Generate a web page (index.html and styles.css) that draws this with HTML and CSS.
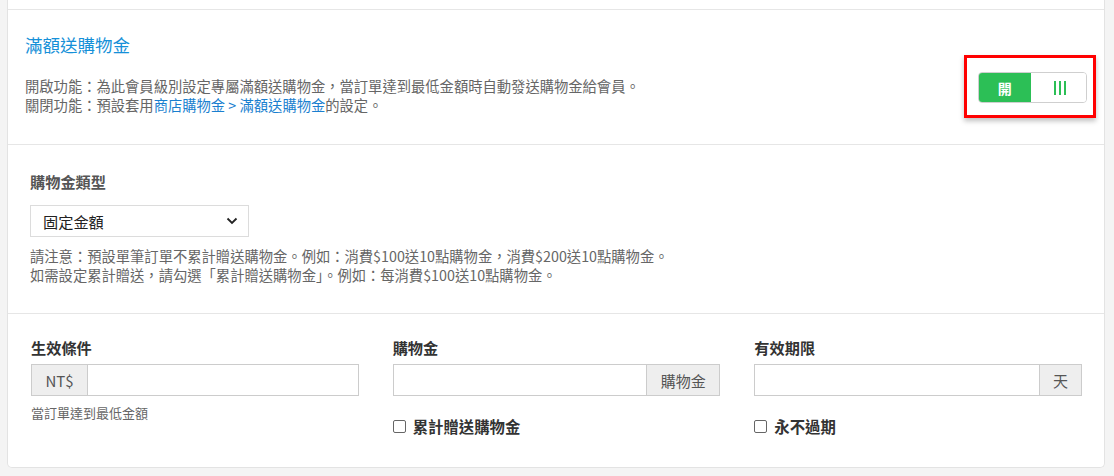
FILE: index.html
```html
<!DOCTYPE html>
<html lang="zh-Hant">
<head>
  <meta charset="UTF-8" />
  <title>滿額送購物金</title>
  <link rel="stylesheet" href="styles.css">
</head>
<body>
  <div class="card">
    <div class="card-top"></div>

    <!-- 開關 -->
    <div class="section intro">
      <div class="intro-text">
        <h3 class="title">滿額送購物金</h3>
        <p class="desc">開啟功能：為此會員級別設定專屬滿額送購物金，當訂單達到最低金額時自動發送購物金給會員。</p>
        <p class="desc">關閉功能：預設套用<a href="#">商店購物金 &gt; 滿額送購物金</a>的設定。</p>
      </div>
      <div class="highlight">
        <div class="toggle">
          <span class="toggle-on">開</span>
          <span class="toggle-off">
            <svg width="12" height="14" viewBox="0 0 12 14"><rect x="0" y="0" width="2" height="14" fill="#2cbf56"/><rect x="5" y="0" width="2" height="14" fill="#2cbf56"/><rect x="10" y="0" width="2" height="14" fill="#2cbf56"/></svg>
          </span>
        </div>
      </div>
    </div>

    <!-- 類型 -->
    <div class="section type">
      <label class="label muted">購物金類型</label>
      <div class="select">
        <span>固定金額</span>
        <svg width="12" height="8" viewBox="0 0 12 8"><path d="M1.5 1.5 L6 6 L10.5 1.5" fill="none" stroke="#222" stroke-width="1.8"/></svg>
      </div>
      <p class="help big">請注意：預設單筆訂單不累計贈送購物金。例如：消費$100送10點購物金，消費$200送10點購物金。</p>
      <p class="help big">如需設定累計贈送，請勾選「累計贈送購物金」。例如：每消費$100送10點購物金。</p>
    </div>

    <!-- 條件 -->
    <div class="section fields">
      <div class="field">
        <label class="label">生效條件</label>
        <div class="input-group">
          <span class="addon addon-left">NT$</span>
          <input type="text" />
        </div>
        <p class="help">當訂單達到最低金額</p>
      </div>
      <div class="field">
        <label class="label">購物金</label>
        <div class="input-group">
          <input type="text" />
          <span class="addon addon-right">購物金</span>
        </div>
        <label class="check"><span class="box"></span>累計贈送購物金</label>
      </div>
      <div class="field">
        <label class="label">有效期限</label>
        <div class="input-group">
          <input type="text" />
          <span class="addon addon-right addon-day">天</span>
        </div>
        <label class="check"><span class="box"></span>永不過期</label>
      </div>
    </div>
  </div>
</body>
</html>
```

FILE: styles.css
```css
body {
  margin: 0;
  background: #f4f4f4;
  font-family: "Noto Sans CJK TC", "Noto Sans", sans-serif;
  color: #333;
  padding: 0 9px 8px 7px;
}
.card {
  background: #fff;
  border: 1px solid #e3e3e3;
  border-top: none;
  border-radius: 0 0 5px 5px;
}
.card-top {
  height: 9px;
  border-bottom: 1px solid #e6e6e6;
}
.section {
  border-bottom: 1px solid #e6e6e6;
}
.section:last-child {
  border-bottom: none;
}
.intro {
  display: flex;
  justify-content: space-between;
  align-items: flex-start;
  height: 135px;
  box-sizing: border-box;
  padding: 24px 8px 0 17px;
}
.title {
  margin: 0 0 20px;
  font-size: 17.5px;
  font-weight: normal;
  line-height: 22px;
  color: #1590d8;
}
.desc {
  margin: 0;
  font-size: 14.3px;
  line-height: 19px;
  color: #666;
}
.desc a {
  color: #1a7fcf;
  text-decoration: none;
}
.highlight {
  margin-top: 21px;
  border: 3px solid #ff0000;
  padding: 14px 6px 12px 11px;
  box-shadow: 0 3px 5px rgba(0, 0, 0, 0.25);
}
.toggle {
  display: flex;
  width: 109px;
  height: 31px;
  box-sizing: border-box;
  border: 1px solid #cfcfcf;
  border-radius: 4px;
  overflow: hidden;
}
.toggle span {
  flex: 1;
  display: flex;
  align-items: center;
  justify-content: center;
}
.toggle-on {
  background: #2cbf56;
  color: #fff;
  font-weight: bold;
  font-size: 14px;
}
.toggle-off {
  background: #fff;
  padding-left: 4px;
}
.type {
  height: 169px;
  box-sizing: border-box;
  padding: 26px 22px 0 22px;
}
.label {
  display: block;
  font-size: 15.2px;
  font-weight: bold;
  line-height: 20px;
  color: #333;
  margin-bottom: 7px;
}
.label.muted {
  color: #555;
  margin-bottom: 14px;
}
.select {
  display: flex;
  align-items: center;
  justify-content: space-between;
  width: 219px;
  height: 32px;
  box-sizing: border-box;
  border: 1px solid #dcdcdc;
  padding: 0 10px 0 12px;
  font-size: 15.2px;
  color: #222;
}
.help {
  margin: 0;
  font-size: 13px;
  line-height: 19px;
  color: #666;
}
.help.big {
  font-size: 14.3px;
}
.select + .help {
  margin-top: 9px;
}
.fields {
  display: grid;
  grid-template-columns: repeat(3, 1fr);
  column-gap: 34px;
  height: 153px;
  box-sizing: border-box;
  padding: 23px 22px 0 23px;
}
.input-group {
  display: flex;
  height: 32px;
  border: 1px solid #cccccc;
  box-sizing: border-box;
}
.input-group input {
  flex: 1;
  min-width: 0;
  border: none;
  outline: none;
  padding: 0 8px;
  font-size: 14px;
}
.addon {
  display: flex;
  align-items: center;
  justify-content: center;
  background: #eeeeee;
  color: #555;
  font-size: 15px;
}
.addon-left {
  width: 55px;
  border-right: 1px solid #cccccc;
}
.addon-right {
  width: 72px;
  border-left: 1px solid #cccccc;
}
.addon-day {
  width: 41px;
}
.input-group + .help {
  margin-top: 7px;
}
.check {
  display: flex;
  align-items: center;
  margin-top: 19px;
  font-size: 15.4px;
  font-weight: bold;
  color: #333;
}
.box {
  width: 11px;
  height: 11px;
  border: 1px solid #666;
  border-radius: 2px;
  margin-right: 7px;
}
```
